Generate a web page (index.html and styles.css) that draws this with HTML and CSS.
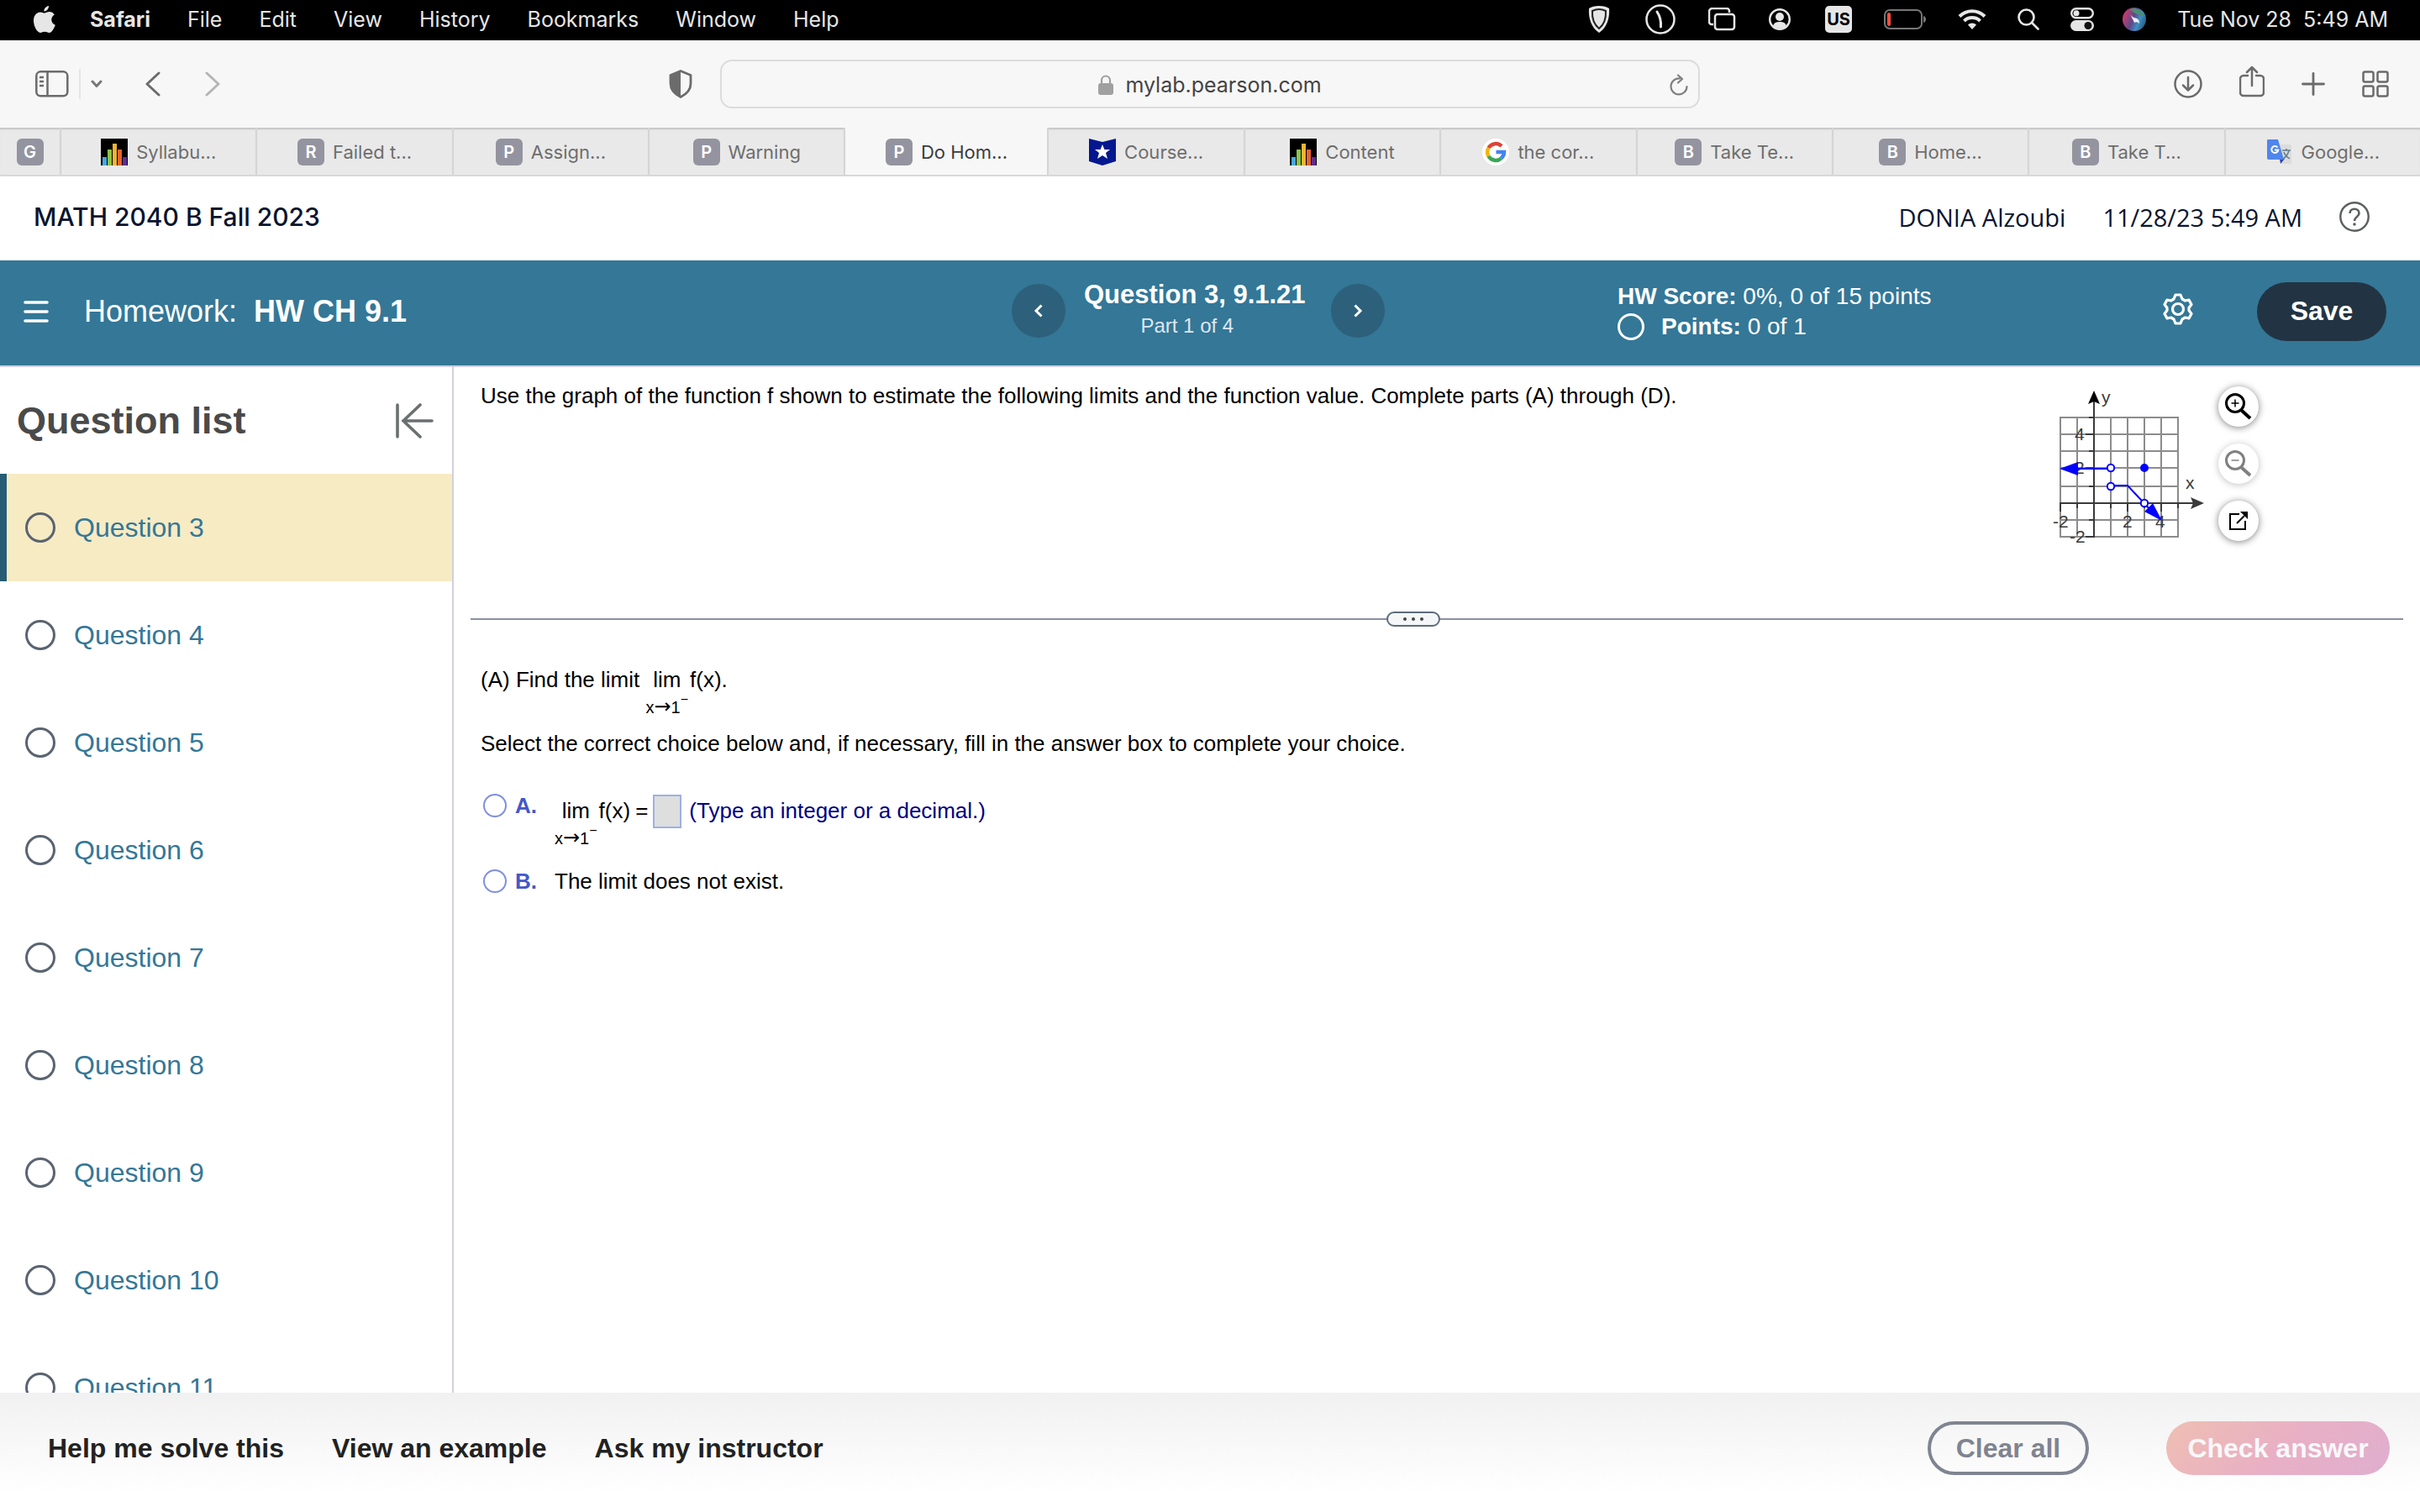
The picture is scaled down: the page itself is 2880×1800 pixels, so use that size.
FILE: index.html
```html
<!DOCTYPE html>
<html lang="en">
<head>
  <meta charset="UTF-8">
  <meta name="viewport" content="width=device-width, initial-scale=1.0">
  <title>Do Homework - HW CH 9.1</title>
  <link rel="stylesheet" href="styles.css">
</head>
<body>
  <!-- menu bar -->
  <div class="menubar">
    <svg class="apple" width="26" height="32" viewBox="0 0 26 32" fill="#e6e6e6"><path d="M18 0c.3 3-2.500 6.500-5.600 6.500C12 3.500 15 .4 18 0zM13 8.600c1.400 0 3-1.500 5.800-1.500 2.300 0 4.600 1.200 6 3.300-5.300 3.100-4.400 10.200 1 12.300C24.500 26.500 21.800 32 18.500 32c-2 0-2.900-1.200-5.300-1.200S9.800 32 8 32C4.300 32 0 24.500 0 17.600 0 11 4 7.400 7.800 7.400c2.300 0 3.800 1.200 5.200 1.200z"/></svg>
    <nav class="menus">
      <a href="#" class="app-name">Safari</a>
      <a href="#">File</a>
      <a href="#">Edit</a>
      <a href="#">View</a>
      <a href="#">History</a>
      <a href="#">Bookmarks</a>
      <a href="#">Window</a>
      <a href="#">Help</a>
    </nav>
    <div class="status">
      <svg width="35" height="34" viewBox="0 0 35 34"><path d="M13 1c5 0 9 1 12 3 1 12-3 23-12 29C4 27 0 16 1 4c3-2 7-3 12-3z" fill="#e6e6e6"/><path d="M13 5c4 0 6 1 8 2 .500 8-2 16-8 21C7 23 4.500 15 5 7c2-1 4-2 8-2z" fill="#e6e6e6" stroke="#222" stroke-width="2"/></svg>
      <svg width="42" height="36" viewBox="0 0 42 36" fill="none" stroke="#e6e6e6"><circle cx="18" cy="18" r="16.500" stroke-width="2.500"/><path d="M14 9c4 6 5 11 4.500 18" stroke-width="3" stroke-linecap="round"/></svg>
      <svg width="39" height="28" viewBox="0 0 39 28" fill="none" stroke="#e6e6e6" stroke-width="2.500"><path d="M6 20H4a3 3 0 0 1-3-3V5a4 4 0 0 1 4-4h17a3 3 0 0 1 3 3v2"/><rect x="8" y="8" width="23" height="18" rx="3"/></svg>
      <svg width="34" height="28" viewBox="0 0 34 28"><circle cx="13" cy="14" r="11.800" fill="none" stroke="#e6e6e6" stroke-width="2.400"/><circle cx="13" cy="11" r="5" fill="#e6e6e6"/><path d="M5 22c1-4 4-5 8-5s7 1 8 5c-4 4-12 4-16 0z" fill="#e6e6e6"/></svg>
      <svg width="37" height="32" viewBox="0 0 37 32"><rect width="32" height="32" rx="5" fill="#e6e6e6"/><text x="16" y="23" class="lang" text-anchor="middle">US</text></svg>
      <svg width="55" height="24" viewBox="0 0 55 24"><rect x="1" y="1" width="44" height="22" rx="6" fill="none" stroke="#777" stroke-width="2"/><rect x="4" y="4" width="4" height="16" rx="2" fill="#ff4f3a"/><path d="M47 8c4 1 4 7 0 8z" fill="#777"/></svg>
      <svg width="38" height="26" viewBox="0 0 38 26" fill="none" stroke="#e6e6e6" stroke-width="4"><path d="M2 9.500a21 21 0 0 1 30 0M7.500 15a13.500 13.500 0 0 1 19 0"/><path d="M17 25l-5-5.500a7 7 0 0 1 10 0z" fill="#e6e6e6" stroke="none"/></svg>
      <svg width="30" height="26" viewBox="0 0 30 26" fill="none" stroke="#e6e6e6" stroke-width="2.600" stroke-linecap="round"><circle cx="10.500" cy="10.500" r="9"/><path d="M17 17l7.500 7.500"/></svg>
      <svg width="29" height="28" viewBox="0 0 29 28"><rect x="1.200" y="1.200" width="25.600" height="11" rx="5.500" fill="none" stroke="#e6e6e6" stroke-width="2.400"/><circle cx="7" cy="6.700" r="3.500" fill="#e6e6e6"/><rect y="15" width="28" height="13" rx="6.500" fill="#e6e6e6"/><circle cx="21" cy="21.500" r="4.500" fill="#111"/></svg>
      <svg width="28" height="28" viewBox="0 0 28 28"><defs><linearGradient id="siri" x1="0" y1="0.300" x2="1" y2="0.700"><stop offset="0" stop-color="#d63a6a"/><stop offset="0.450" stop-color="#5b4a8a"/><stop offset="0.700" stop-color="#3f8fc4"/><stop offset="1" stop-color="#245a7a"/></linearGradient></defs><circle cx="14" cy="14" r="14" fill="url(#siri)"/><path d="M9 2c8-3 15 2 17 9-5-3-11-2-17-9z" fill="#4b8f74"/><path d="M9 8c2 3 4 4 8 5 2 1 3 3 3 6-2-2-4-2-6-1-1-3-3-6-5-10z" fill="#fff" opacity=".9"/></svg>
      <span class="clock">Tue Nov 28&nbsp; 5:49 AM</span>
    </div>
  </div>

  <!-- browser toolbar -->
  <div class="toolbar">
    <div class="tools-left">
      <button type="button" class="tool" aria-label="Sidebar"><svg width="40" height="32" viewBox="0 0 40 32" fill="none" stroke="#6b6b6b" stroke-width="2.500"><rect x="1.300" y="1.300" width="37" height="29" rx="5"/><path d="M14.500 1v30M5 8h5M5 13h5M5 18h5"/></svg></button>
      <span class="tool-line"></span>
      <button type="button" class="tool tab-groups" aria-label="Tab groups"><svg width="14" height="10" viewBox="0 0 14 10" fill="none" stroke="#777" stroke-width="3" stroke-linecap="round" stroke-linejoin="round"><path d="M2 2l5 5.500L12 2"/></svg></button>
      <button type="button" class="tool back" aria-label="Back"><svg width="18" height="30" viewBox="0 0 18 30" fill="none" stroke="#6b6b6b" stroke-width="3" stroke-linecap="round" stroke-linejoin="round"><path d="M16 2L2 15l14 13"/></svg></button>
      <button type="button" class="tool" aria-label="Forward"><svg width="18" height="30" viewBox="0 0 18 30" fill="none" stroke="#b5b5b5" stroke-width="3" stroke-linecap="round" stroke-linejoin="round"><path d="M2 2l14 13L2 28"/></svg></button>
      <button type="button" class="tool privacy" aria-label="Privacy report"><svg width="28" height="34" viewBox="0 0 28 34"><path d="M14 1.500L26 6.500v10C26 25 20 29.500 14 32.500 8 29.500 2 25 2 16.500v-10z" fill="none" stroke="#6b6b6b" stroke-width="2.800" stroke-linejoin="round"/><path d="M14 1.500v31C8 29.500 2 25 2 16.500v-10z" fill="#6b6b6b"/></svg></button>
    </div>
    <div class="address">
      <svg width="18" height="24" viewBox="0 0 18 24"><path d="M4 11V6.500a5 5 0 0 1 10 0V11" fill="none" stroke="#a0a0a0" stroke-width="2.200"/><rect x="0" y="10" width="18" height="14" rx="3" fill="#a0a0a0"/></svg>
      <span>mylab.pearson.com</span>
      <button type="button" class="tool reload" aria-label="Reload"><svg width="22" height="26" viewBox="0 0 22 26" fill="none" stroke="#808080" stroke-width="2.200" stroke-linecap="round" stroke-linejoin="round"><path d="M12 5.500a9.500 9.500 0 1 0 8.500 9.500M10 1.500l5 4.500-5 4.500"/></svg></button>
    </div>
    <div class="tools-right">
      <button type="button" class="tool" aria-label="Downloads"><svg width="34" height="34" viewBox="0 0 34 34" fill="none" stroke="#6b6b6b" stroke-width="2.500" stroke-linecap="round" stroke-linejoin="round"><circle cx="17" cy="17" r="15.500"/><path d="M17 9v15M11 18.500l6 6 6-6"/></svg></button>
      <button type="button" class="tool share" aria-label="Share"><svg width="30" height="38" viewBox="0 0 30 38" fill="none" stroke="#6b6b6b" stroke-width="2.500" stroke-linecap="round" stroke-linejoin="round"><path d="M10 12H5a4 4 0 0 0-4 4v16a4 4 0 0 0 4 4h20a4 4 0 0 0 4-4V16a4 4 0 0 0-4-4h-5M15 24V2M9 8l6-6 6 6"/></svg></button>
      <button type="button" class="tool" aria-label="New tab"><svg width="28" height="28" viewBox="0 0 28 28" fill="none" stroke="#6b6b6b" stroke-width="2.800" stroke-linecap="round"><path d="M14 1.500v25M1.500 14h25"/></svg></button>
      <button type="button" class="tool" aria-label="Tab overview"><svg width="32" height="32" viewBox="0 0 32 32" fill="none" stroke="#6b6b6b" stroke-width="2.500"><rect x="1.500" y="1.500" width="12" height="12" rx="2"/><rect x="18.500" y="1.500" width="12" height="12" rx="2"/><rect x="1.500" y="18.500" width="12" height="12" rx="2"/><rect x="18.500" y="18.500" width="12" height="12" rx="2"/></svg></button>
    </div>
  </div>

  <!-- tabs -->
  <div class="tabs">
    <a href="#" class="tab pinned"><span class="letter">G</span></a>
    <a href="#" class="tab"><svg width="32" height="32" viewBox="0 0 32 32"><rect width="32" height="32"/><path d="M2 22h5v10H2z" fill="#4aa8e0"/><path d="M8 13h5v19H8z" fill="#8bc34a"/><path d="M14 6h5v26h-5z" fill="#f0b432"/><path d="M20 13h5v19h-5z" fill="#e8632e"/><path d="M26 22h5v10h-5z" fill="#5e2d91"/></svg>Syllabu...</a>
    <a href="#" class="tab"><span class="letter">R</span>Failed t...</a>
    <a href="#" class="tab"><span class="letter">P</span>Assign...</a>
    <a href="#" class="tab"><span class="letter">P</span>Warning</a>
    <a href="#" class="tab active"><span class="letter">P</span>Do Hom...</a>
    <a href="#" class="tab"><svg width="32" height="32" viewBox="0 0 32 32"><path d="M0 0l16 4L32 0v27l-16 5-16-5z" fill="#04178f"/><path d="M16 7l2.400 6H25l-5 4 2 7-6-4-6 4 2-7-5-4h6.600z" fill="#fff"/></svg>Course...</a>
    <a href="#" class="tab"><svg width="32" height="32" viewBox="0 0 32 32"><rect width="32" height="32"/><path d="M2 22h5v10H2z" fill="#4aa8e0"/><path d="M8 13h5v19H8z" fill="#8bc34a"/><path d="M14 6h5v26h-5z" fill="#f0b432"/><path d="M20 13h5v19h-5z" fill="#e8632e"/><path d="M26 22h5v10h-5z" fill="#5e2d91"/></svg>Content</a>
    <a href="#" class="tab"><svg width="32" height="32" viewBox="0 0 32 32" fill="none" stroke-width="4.500"><circle cx="16" cy="16" r="16" fill="#fff"/><path d="M23 9a9.800 9.800 0 0 0-15.500 2" stroke="#db4437"/><path d="M7.500 11a10 10 0 0 0 0 10" stroke="#f4b400"/><path d="M7.500 21a9.800 9.800 0 0 0 15 2.500" stroke="#3aa757"/><path d="M16.500 16H26c0 3-1.200 5.500-3.500 7.500" stroke="#4285f4"/></svg>the cor...</a>
    <a href="#" class="tab"><span class="letter">B</span>Take Te...</a>
    <a href="#" class="tab"><span class="letter">B</span>Home...</a>
    <a href="#" class="tab"><span class="letter">B</span>Take T...</a>
    <a href="#" class="tab"><svg width="32" height="32" viewBox="0 0 32 32"><path d="M12 7h16a2 2 0 0 1 2 2v21H18z" fill="#dcdcdc"/><path d="M16 24h6l-5 6z" fill="#2f3fae"/><path d="M2 1h12l7 24H3a2 2 0 0 1-2-2V2z" fill="#4f86ec"/><path d="M13.500 10.500a4 4 0 1 0 .800 3H10" fill="none" stroke="#fff" stroke-width="2"/><path d="M19 14h10M24 12v2M27 14c-1 5-4 8-7 10M21 16c1 4 4 6 7 8" fill="none" stroke="#607d8b" stroke-width="1.500"/></svg>Google...</a>
  </div>

  <!-- course header -->
  <header class="course">
    <h1>MATH 2040 B Fall 2023</h1>
    <div class="user">
      <span>DONIA Alzoubi</span>
      <span>11/28/23 5:49 AM</span>
      <button type="button" class="help" aria-label="Help"><svg width="36" height="36" viewBox="0 0 36 36" fill="none" stroke="#5c5f5f"><circle cx="18" cy="18" r="16.700" stroke-width="2.400"/><path d="M12.500 14c0-7 11-7 11 0 0 4-5.500 4-5.500 9" stroke-width="2.600"/><circle cx="18" cy="27" r="1.800" fill="#5c5f5f" stroke="none"/></svg></button>
    </div>
  </header>

  <!-- assignment bar -->
  <div class="assignment">
    <div class="assign-title">
      <button type="button" class="plain" aria-label="Menu"><svg width="30" height="28" viewBox="0 0 30 28" stroke="#fff" stroke-width="3.600" stroke-linecap="round"><path d="M2 3h26M2 14h26M2 25h26"/></svg></button>
      <h2>Homework: <b>HW CH 9.1</b></h2>
    </div>
    <div class="pager">
      <button type="button" class="round" aria-label="Previous question"><svg width="12" height="16" viewBox="0 0 12 16" fill="none" stroke="#fff" stroke-width="3"><path d="M9.500 1.500L3 8l6.500 6.500"/></svg></button>
      <div class="pager-text">
        <strong>Question 3, 9.1.21</strong>
        <span>Part 1 of 4</span>
      </div>
      <button type="button" class="round" aria-label="Next question"><svg width="12" height="16" viewBox="0 0 12 16" fill="none" stroke="#fff" stroke-width="3"><path d="M2.500 1.500L9 8l-6.500 6.500"/></svg></button>
    </div>
    <div class="score">
      <div><b>HW Score:</b> 0%, 0 of 15 points</div>
      <div class="points"><i class="ring"></i><span><b>Points:</b> 0 of 1</span></div>
    </div>
    <div class="assign-actions">
      <button type="button" class="settings" aria-label="Settings"><svg width="36" height="38" viewBox="0 0 36 38" fill="none" stroke="#fff" stroke-width="3.200" stroke-linejoin="round"><path d="M15 2h6l2 5 3.500 2 4.500-1 3 5.500-3 4v3l3 4-3 5.500-4.500-1L23 31l-2 5h-6l-2-5-3.500-2L5 30l-3-5.500 3-4v-3l-3-4L5 8l4.500 1L13 7z"/><circle cx="18" cy="19" r="6.500"/></svg></button>
      <button type="button" class="save">Save</button>
    </div>
  </div>

  <div class="workspace">
    <aside class="sidebar">
      <div class="sidebar-head">
        <h3>Question list</h3>
        <button type="button" class="plain" aria-label="Collapse list"><svg width="46" height="42" viewBox="0 0 46 42" fill="none" stroke="#6a7070" stroke-width="3.600" stroke-linecap="round"><path d="M3 2v38M44 21H10M30 2L10 21l20 19"/></svg></button>
      </div>
      <ul class="questions">
        <li class="current"><a href="#"><i></i>Question 3</a></li>
        <li><a href="#"><i></i>Question 4</a></li>
        <li><a href="#"><i></i>Question 5</a></li>
        <li><a href="#"><i></i>Question 6</a></li>
        <li><a href="#"><i></i>Question 7</a></li>
        <li><a href="#"><i></i>Question 8</a></li>
        <li><a href="#"><i></i>Question 9</a></li>
        <li><a href="#"><i></i>Question 10</a></li>
        <li><a href="#"><i></i>Question 11</a></li>
      </ul>
    </aside>

    <main class="exercise">
      <section class="problem">
        <p>Use the graph of the function f shown to estimate the following limits and the function value. Complete parts (A) through (D).</p>
        <svg class="graph" width="190" height="190" viewBox="40 20 190 190">
          <!-- grid -->
          <path d="M52 56v144M72 56v144M112 56v144M132 56v144M152 56v144M172 56v144M192 56v144M51 57h142M51 77h142M51 97h142M51 117h142M51 139h142M51 179h142M51 199h142" stroke="#8c8c8c" stroke-width="2"/>
          <!-- axes -->
          <path d="M92 36v164M51 159h160M86 57h6M82 77h10M86 97h6M82 117h10M86 139h6M86 179h6M82 199h10M52 159v10M72 159v6M112 159v6M132 159v10M152 159v6M172 159v10M192 159v6" stroke="#3a3a3a" stroke-width="2"/>
          <path d="M92 25l7 16-7-3-7 3z" fill="#000"/>
          <path d="M223 159l-16 7 3-7-3-7z" fill="#3a3a3a"/>
          <text x="101" y="40">y</text>
          <text x="201" y="142">x</text>
          <text x="69" y="84">4</text>
          <text x="69" y="124">2</text>
          <text x="43" y="188">-2</text>
          <text x="63" y="206">-2</text>
          <text x="126" y="188">2</text>
          <text x="165" y="188">4</text>
          <!-- function -->
          <path d="M60 118h52M112 138h20l30 32" fill="none" stroke="#00f" stroke-width="2"/>
          <path d="M51 118l22-8v16zM173 180l-21-11 10-10z" fill="#00f"/>
          <g fill="#fff" stroke="#00f" stroke-width="2"><circle cx="112" cy="117" r="4.200"/><circle cx="112" cy="139" r="4.200"/><circle cx="152" cy="159" r="4.200"/></g>
          <circle cx="152" cy="117" r="5" fill="#00f"/>
        </svg>
        <div class="graph-tools">
          <button type="button" aria-label="Zoom in"><svg width="34" height="34" viewBox="0 0 34 34" fill="none" stroke="#000"><circle cx="13" cy="13" r="10.500" stroke-width="3"/><path d="M20.500 21.500L31 31" stroke-width="4"/><path d="M13 8.500v9M8.500 13h9" stroke-width="1.500"/></svg></button>
          <button type="button" class="off" aria-label="Zoom out"><svg width="34" height="34" viewBox="0 0 34 34" fill="none" stroke="#808080"><circle cx="13" cy="13" r="10.500" stroke-width="3"/><path d="M20.500 21.500L31 31" stroke-width="4"/><path d="M8.500 13h9" stroke-width="1.500"/></svg></button>
          <button type="button" aria-label="Open in new window"><svg width="24" height="24" viewBox="0 0 24 24" fill="none" stroke="#000" stroke-width="2"><path d="M13 4H2v18h18V12M10 15l9-9"/><path d="M14 1h9v9z" fill="#000" stroke="none"/></svg></button>
        </div>
      </section>

      <div class="splitter"><button type="button" aria-label="Resize"><i></i><i></i><i></i></button></div>

      <section class="part">
        <p class="math">(A) Find the limit <span class="limit"><span>lim</span><small>x<span class="arrow">→</span>1<sup>−</sup></small></span>f(x).</p>
        <p class="instructions">Select the correct choice below and, if necessary, fill in the answer box to complete your choice.</p>
        <div class="choice">
          <input type="radio" name="choice" id="choice-a">
          <label for="choice-a">A.</label>
          <div class="math shifted"><span class="limit"><span>lim</span><small>x<span class="arrow">→</span>1<sup>−</sup></small></span>f(x)<span class="equals">=</span><input type="text" class="answer" aria-label="Limit value"><span class="hint">(Type an integer or a decimal.)</span></div>
        </div>
        <div class="choice">
          <input type="radio" name="choice" id="choice-b">
          <label for="choice-b">B.</label>
          <div>The limit does not exist.</div>
        </div>
      </section>
    </main>
  </div>

  <footer class="actions">
    <a href="#">Help me solve this</a>
    <a href="#">View an example</a>
    <a href="#">Ask my instructor</a>
    <button type="button" class="clear">Clear all</button>
    <button type="button" class="check">Check answer</button>
  </footer>
</body>
</html>
```
FILE: styles.css
```css
* {
  box-sizing: border-box;
}
body {
  margin: 0;
  height: 100vh;
  display: flex;
  flex-direction: column;
  overflow: hidden;
  background: #fff;
  color: #000;
  font-family: "Liberation Sans", Arial, sans-serif;
  font-size: 26px;
}
a {
  color: inherit;
  text-decoration: none;
}
button {
  font-family: inherit;
  padding: 0;
  border: none;
  background: none;
  cursor: pointer;
}
svg {
  display: block;
  flex-shrink: 0;
}
h1, h2, h3, p {
  margin: 0;
  font-weight: normal;
}

/* menu bar */
.menubar {
  display: flex;
  align-items: center;
  flex-shrink: 0;
  height: 48px;
  padding: 0 38px 2px 40px;
  background: #000;
  color: #e6e6e6;
  font-family: Inter, sans-serif;
  font-size: 25px;
}
.apple {
  margin-right: 41px;
}
.menus {
  display: flex;
  gap: 44px;
}
.app-name {
  font-weight: bold;
}
.status {
  display: flex;
  align-items: center;
  gap: 33px;
  margin-left: auto;
}
.clock {
  margin-left: 4px;
}
.lang {
  font: bold 20px Inter, sans-serif;
}

/* toolbar */
.toolbar {
  display: grid;
  grid-template-columns: 1fr 1166px 1fr;
  align-items: center;
  flex-shrink: 0;
  height: 104px;
  background: #f7f7f7;
}
.tools-left, .tools-right {
  display: flex;
  align-items: center;
}
.tools-left {
  padding: 0 33px 0 42px;
}
.tool-line {
  width: 2px;
  height: 36px;
  margin: 0 12px;
  background: #e5e5e5;
}
.back {
  margin: 0 53px 0 51px;
}
.privacy {
  margin-left: auto;
}
.address {
  display: flex;
  align-items: center;
  justify-content: center;
  gap: 14px;
  position: relative;
  height: 58px;
  padding-top: 2px;
  border: 2px solid #dcdcdc;
  border-radius: 14px;
  color: #444;
  font-family: Inter, sans-serif;
  font-size: 25px;
}
.reload {
  position: absolute;
  right: 12px;
}
.tools-right {
  justify-content: flex-end;
  gap: 44px;
  padding-right: 37px;
}
.share {
  padding-bottom: 6px;
}

/* tabs */
.tabs {
  display: flex;
  flex-shrink: 0;
  height: 58px;
  background: #e9e9e9;
  border-bottom: 2px solid #d8d8d8;
}
.tab {
  display: flex;
  flex: 1;
  align-items: center;
  justify-content: center;
  gap: 10px;
  padding-top: 2px;
  border-right: 2px solid #d5d5d5;
  box-shadow: inset 0 3px 2px -1px #c4c4c4;
  color: #6e6e6e;
  font-family: Inter, sans-serif;
  font-size: 22px;
}
.tab:last-child {
  border-right: none;
}
.pinned {
  flex: 0 0 73px;
}
.active {
  flex: 0 0 242px;
  background: #f7f7f7;
  box-shadow: none;
  color: #3c3c3c;
}
.letter {
  width: 32px;
  height: 32px;
  border-radius: 6px;
  background: #9494a0;
  color: #fff;
  font-size: 20px;
  font-weight: 600;
  line-height: 32px;
  text-align: center;
}

/* course header */
.course {
  display: flex;
  align-items: center;
  justify-content: space-between;
  flex-shrink: 0;
  height: 100px;
  padding: 0 60px 4px 40px;
  color: #0a1530;
  font-family: "Open Sans", sans-serif;
  font-size: 29px;
}
.course h1 {
  font-family: Inter, sans-serif;
  font-size: 30px;
  font-weight: 500;
}
.user {
  display: flex;
  align-items: center;
  gap: 44px;
}

/* assignment bar */
.assignment {
  display: grid;
  grid-template-columns: 1204px 721px 1fr auto;
  align-items: center;
  flex-shrink: 0;
  height: 127px;
  padding-right: 40px;
  background: #347797;
  border-bottom: 2px solid #d0d0e0;
  color: #fff;
}
.assign-title {
  display: flex;
  align-items: center;
  gap: 42px;
  padding: 0 0 4px 28px;
}
.assign-title h2 {
  font-size: 36px;
}
.assign-title b {
  margin-left: 10px;
}
.pager {
  display: flex;
  align-items: center;
  gap: 22px;
  padding-bottom: 6px;
}
.pager-text {
  display: flex;
  flex-direction: column;
  align-items: center;
  padding: 0 8px 2px 0;
}
.pager-text strong {
  font-size: 31px;
  line-height: 38px;
}
.pager-text span {
  padding-right: 18px;
  color: #dfe6f0;
  font-size: 24px;
  line-height: 36px;
}
.round {
  display: flex;
  align-items: center;
  justify-content: center;
  width: 64px;
  height: 64px;
  border-radius: 50%;
  background: #2d607b;
}
.score {
  padding-bottom: 4px;
  font-size: 28px;
  line-height: 36px;
}
.points {
  display: flex;
  align-items: center;
  gap: 20px;
}
.ring {
  width: 32px;
  height: 32px;
  border: 3px solid #fff;
  border-radius: 50%;
}
.assign-actions {
  display: flex;
  align-items: center;
  gap: 76px;
  padding-bottom: 4px;
}
.settings {
  padding-bottom: 6px;
}
.save {
  width: 154px;
  height: 70px;
  border-radius: 35px;
  background: #223443;
  color: #fff;
  font-size: 32px;
  font-weight: bold;
}

/* question list */
.workspace {
  display: flex;
  flex: 1;
  min-height: 0;
}
.sidebar {
  flex: 0 0 540px;
  border-right: 2px solid #d0d0e0;
  overflow: hidden;
}
.sidebar-head {
  display: flex;
  align-items: center;
  justify-content: space-between;
  height: 127px;
  padding: 0 22px 0 20px;
}
.sidebar-head h3 {
  color: #4a4a4a;
  font-size: 45px;
  font-weight: bold;
}
.questions {
  margin: 0;
  padding: 0;
  list-style: none;
}
.questions a {
  display: flex;
  align-items: center;
  gap: 22px;
  height: 128px;
  padding-left: 22px;
  border-left: 8px solid transparent;
  color: #347797;
  font-size: 32px;
}
.questions i {
  width: 36px;
  height: 36px;
  border: 3px solid #5a6470;
  border-radius: 50%;
}
.questions .current a {
  border-left-color: #265d75;
  background: #f7ebc3;
}

/* exercise */
.exercise {
  flex: 1;
  padding: 0 20px;
}
.problem {
  display: flex;
  align-items: flex-start;
  height: 299px;
  padding: 18px 172px 0 12px;
}
.problem p {
  flex: 1;
  line-height: 32px;
}
.graph {
  margin: 5px 10px 0 0;
  fill: #3a3a3a;
  font-size: 21px;
}
.graph-tools {
  display: flex;
  flex-direction: column;
  gap: 20px;
  padding: 5px 0 0;
}
.graph-tools button {
  display: flex;
  align-items: center;
  justify-content: center;
  width: 48px;
  height: 48px;
  border-radius: 50%;
  background: #fff;
  box-shadow: 0 1px 8px rgba(0, 0, 0, 0.5);
}
.graph-tools .off {
  box-shadow: 0 1px 8px rgba(0, 0, 0, 0.25);
}
.splitter {
  display: flex;
  justify-content: center;
  align-items: center;
  height: 2px;
  background: #8a90a2;
}
.splitter button {
  display: flex;
  align-items: center;
  justify-content: center;
  gap: 6px;
  flex-shrink: 0;
  width: 64px;
  height: 18px;
  margin-right: 56px;
  border: 2px solid #5c6b7a;
  border-radius: 9px;
  background: #f4f6f8;
}
.splitter i {
  width: 4px;
  height: 4px;
  border-radius: 50%;
  background: #444;
}
.part {
  padding: 54px 12px 0;
  line-height: 34px;
}
.math {
  display: flex;
  align-items: baseline;
  white-space: pre;
}
.limit {
  display: inline-flex;
  flex-direction: column;
  align-items: center;
  margin-right: 2px;
}
.limit small {
  font-size: 20px;
  line-height: 32px;
}
.limit sup {
  font-size: 16px;
  line-height: 0;
  vertical-align: 11px;
}
.arrow {
  font-family: "DejaVu Sans", sans-serif;
  font-size: 24px;
  line-height: 0;
}
.equals {
  margin: 0 6px;
}
.instructions {
  margin: 10px 0 40px;
}
.choice {
  display: flex;
  align-items: flex-start;
  margin-bottom: 18px;
}
.choice input[type="radio"] {
  appearance: none;
  width: 28px;
  height: 28px;
  margin: 3px 10px 0 3px;
  border: 2px solid #7f90dd;
  border-radius: 50%;
}
.choice label {
  width: 47px;
  color: #4458c8;
  font-weight: bold;
}
.shifted {
  padding-top: 6px;
}
.answer {
  align-self: flex-start;
  width: 34px;
  height: 40px;
  margin: -2px 9px 0 0;
  border: 2px solid #9db0e4;
  background: #dedede;
}
.hint {
  color: #000080;
}

/* footer */
.actions {
  display: flex;
  align-items: center;
  flex-shrink: 0;
  gap: 57px;
  height: 142px;
  padding: 0 36px 10px 57px;
  background: linear-gradient(#f1f1f1, #fff 85%);
  color: #222;
  font-size: 32px;
  font-weight: bold;
}
.actions button {
  height: 64px;
  border-radius: 32px;
  font-size: 32px;
  font-weight: bold;
}
.actions .clear {
  width: 192px;
  margin: 0 35px 0 auto;
  border: 4px solid #7f8491;
  color: #7f8491;
}
.actions .check {
  width: 266px;
  background: linear-gradient(135deg, #efbfb2, #e9b0c4 50%, #dfaecf);
  color: #f8f8fa;
}
```
